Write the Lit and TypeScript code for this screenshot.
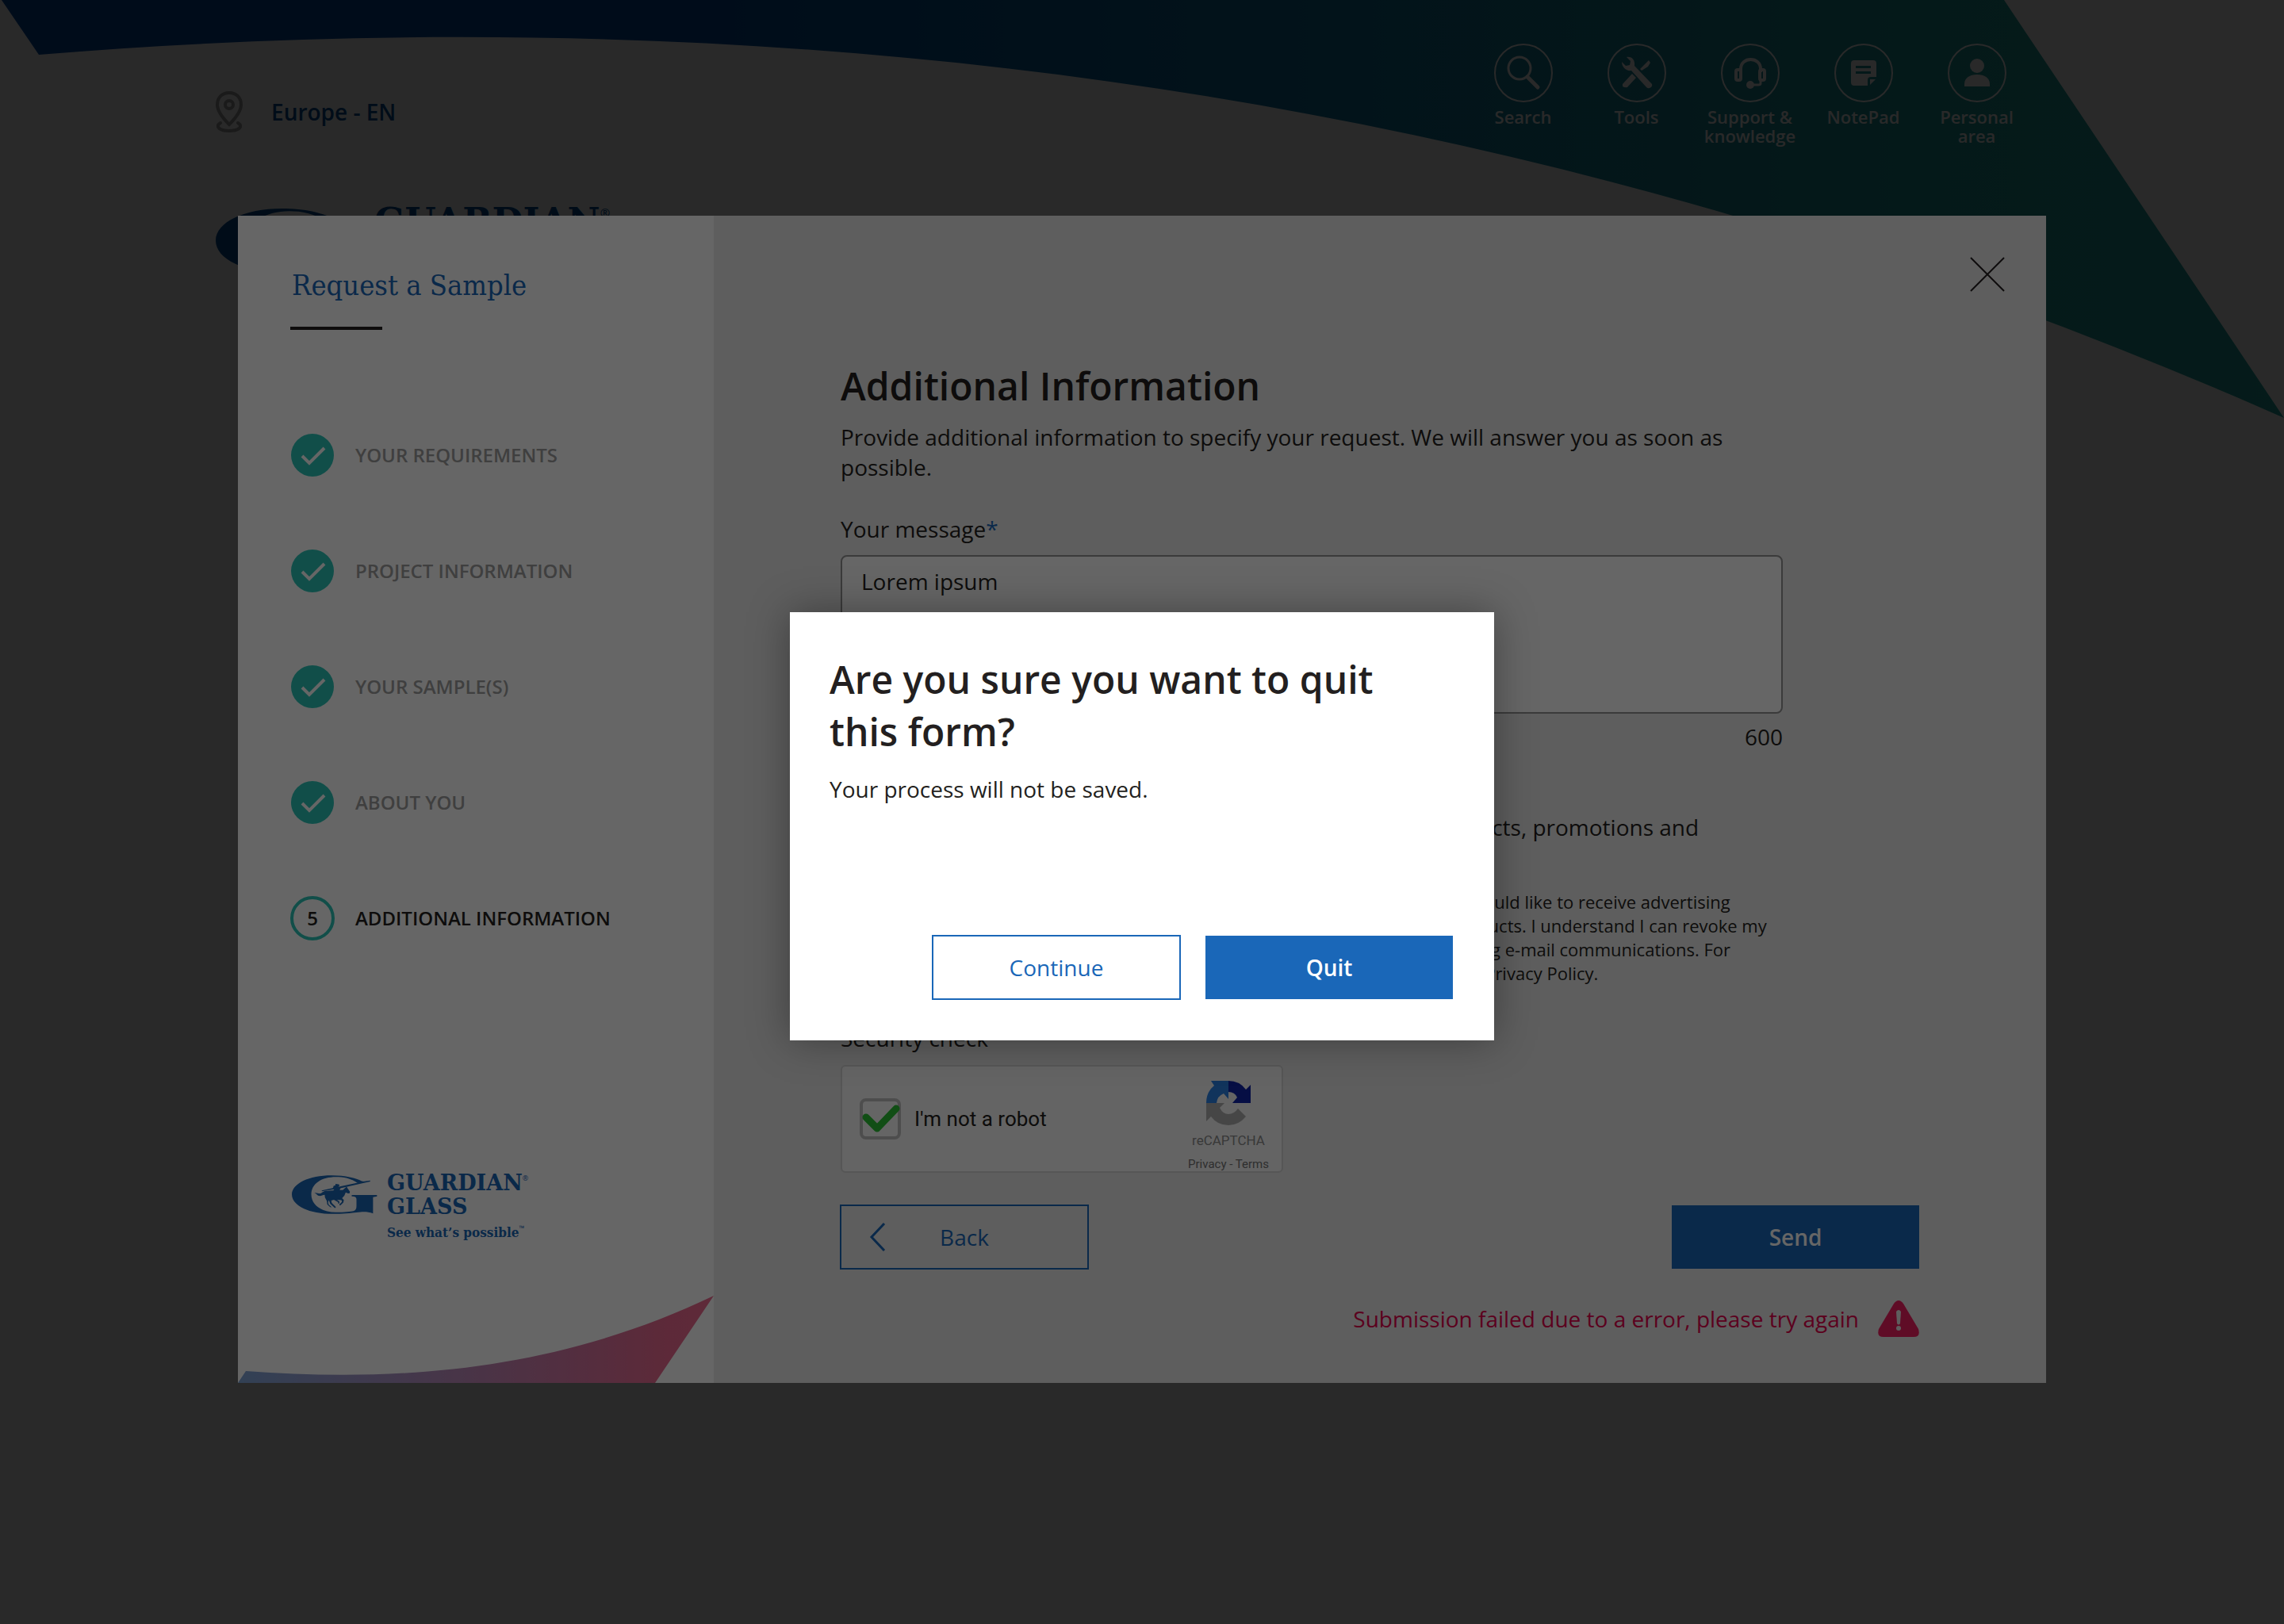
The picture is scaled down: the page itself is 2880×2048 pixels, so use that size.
import { LitElement, html, css, svg } from "lit";
import { customElement, property } from "lit/decorators.js";

const SANS = css`"Open Sans", "Noto Sans", sans-serif`;
const SLAB = css`"DejaVu Serif", serif`;
const SLAB_NARROW = css`"DejaVu Serif Condensed", "DejaVu Serif", serif`;

@customElement("guardian-logo")
class GuardianLogo extends LitElement {
  @property({ type: Boolean, reflect: true }) large = false;
  static styles = css`
    :host { display: block; color: #1a66b6; --s: 3px; }
    :host([large]) { color: #00529b; --s: 5px; }
    .row { display: flex; align-items: flex-start; gap: calc(var(--s) * 4); }
    .mark { width: calc(var(--s) * 36); height: calc(var(--s) * 17); flex: none; }
    .words { display: flex; flex-direction: column; font-family: ${SLAB}; margin-top: calc(var(--s) * -1); }
    .name { display: flex; align-items: flex-start; font-weight: 700; font-size: calc(var(--s) * 9); line-height: calc(var(--s) * 9); }
    .name + .name { margin-top: var(--s); }
    .reg { font: 400 calc(var(--s) * 3) / 1 ${SANS}; margin-top: var(--s); }
    .tag { display: flex; align-items: flex-start; font-family: ${SLAB_NARROW}; font-weight: 700; font-size: calc(var(--s) * 6 - 1px); line-height: calc(var(--s) * 7); margin-top: calc(var(--s) * 3); white-space: nowrap; }
    .tm { font: 400 calc(var(--s) * 3) / 1 ${SANS}; }
  `;
  render() {
    return html`<div class="row">
      <svg class="mark" viewBox="24 22 326 151" fill="currentColor" aria-hidden="true">
        <path d="M308 49 L275 54 C250 35 220 30 192 30 C137 30 98 55 98 97 C98 137 137 165 192 165 C225 165 248 162 258 160 C268 157 270 150 270 140 L270 116 C270 108 266 104 252 104 L252 99 L348 99 L348 104 L333 107 L333 169 C315 163 300 162 285 164 C240 169 220 171 180 171 C90 171 24 140 24 97 C24 55 90 24 175 24 C228 24 268 34 290 46 Z"/>
        <path d="M322 44 L322 48 L205 74 L138 85 L138 82 L200 68 L300 47 Z"/>
        <path d="M110 91 C118 89 126 95 134 93 C142 88 146 83 158 83 L182 82 L186 76 L180 74 L183 64 L190 62 L190 57 L202 58 L206 62 L201 67 L210 71 L206 80 L218 80 L229 70 L233 67 L235 72 L245 86 L244 92 L238 93 L229 89 L224 101 L215 111 L222 118 L220 128 L209 138 L205 138 L206 134 L215 125 L213 119 L196 117 L205 124 L205 131 L201 132 L200 126 L184 117 L174 120 L176 129 L192 145 L188 149 L170 132 L165 119 L162 126 L164 135 L176 146 L170 145 L159 135 L157 122 L150 108 L149 98 C140 99 135 104 126 102 C120 100 116 93 110 91 Z"/>
      </svg>
      <div class="words">
        <span class="name">GUARDIAN<span class="reg">®</span></span>
        <span class="name">GLASS</span>
        <span class="tag">See what’s possible<span class="tm">™</span></span>
      </div>
    </div>`;
  }
}

const navItems = [
  { label: "Search", icon: svg`<circle cx="32" cy="31" r="14" fill="none" stroke="currentColor" stroke-width="3"/><path d="M42 42 L55 55" fill="none" stroke="currentColor" stroke-width="5" stroke-linecap="round"/>` },
  { label: "Tools", icon: svg`<path fill="currentColor" d="M24 17 C31 16 35 21 34 28 L56 51 Q57 53 55 55 L53 56 Q51 57 49 55 L30 34 C24 35 18 30 18 23 L23 28 L28 27 L29 22 Z M52 21 L54 24 L51 29 L43 34 L41 32 L47 26 Z M31 38 L36 43 L25 55 Q22 56 19 54 L19 51 Z"/>` },
  { label: "Support & knowledge", icon: svg`<g fill="none" stroke="currentColor"><path d="M25 36 V32 C25 16 50 16 50 32 V36" stroke-width="4"/><rect x="19" y="33" width="6" height="13" rx="2" stroke-width="4"/><rect x="49" y="33" width="6" height="13" rx="2" stroke-width="4"/><path d="M50 46 V50 Q50 52 47 52 H38" stroke-width="3"/></g><circle cx="37" cy="52" r="5" fill="currentColor"/>` },
  { label: "NotePad", icon: svg`<path fill="currentColor" fill-rule="evenodd" d="M25 21 H49 Q53 21 53 25 V42 H46 Q42 42 42 46 V53 H25 Q21 53 21 49 V25 Q21 21 25 21 Z M27 28 V31 H46 V28 Z M27 35 V38 H46 V35 Z M45 45 H52 L45 52 Z"/>` },
  { label: "Personal area", icon: svg`<circle cx="37" cy="28" r="9" fill="currentColor"/><path fill="currentColor" d="M21 54 V51 C21 43 28 39 37 39 C46 39 53 43 53 51 V54 Z"/>` },
];

const steps = ["YOUR REQUIREMENTS", "PROJECT INFORMATION", "YOUR SAMPLE(S)", "ABOUT YOU", "ADDITIONAL INFORMATION"];

@customElement("app-root")
class AppRoot extends LitElement {
  static styles = css`
    :host { display: block; position: relative; min-height: 100vh; background: #fff; color: #231f20; font: 400 28px/38px ${SANS}; overflow: hidden; }
    * { box-sizing: border-box; }
    h1, h2, p, ol { margin: 0; padding: 0; }
    button { font: inherit; border: 0; padding: 0; background: none; cursor: pointer; }
    svg { display: block; }

    .swoosh { position: absolute; top: 0; left: 0; width: 100%; }
    .top { position: relative; display: flex; justify-content: space-between; align-items: flex-start; padding: 55px 316px 0 272px; }
    .region { display: flex; align-items: center; gap: 36px; margin-top: 60px; color: #00529b; font-weight: 600; text-decoration: none; }
    .pin { width: 34px; height: 52px; color: #a2a2a2; }
    .nav { display: flex; }
    .nav a { display: flex; flex-direction: column; align-items: center; width: 143px; color: #fff; font-weight: 600; font-size: 22px; line-height: 24px; text-align: center; text-decoration: none; gap: 6px; }
    .nav span { width: 120px; }
    .ring { width: 74px; height: 74px; }
    .brand { position: relative; padding: 78px 0 0 272px; }

    .backdrop { position: absolute; inset: 0; background: rgba(0, 0, 0, 0.6); }
    .back-form { padding: 272px 300px 0; }
    .panel { display: grid; grid-template-columns: 600px 1fr; background: #ebebeb; }
    .side { position: relative; display: flex; flex-direction: column; padding: 66px 66px 0; background: #fff; }
    .side h1 { margin-left: 2px; font: 400 36px/44px ${SLAB_NARROW}; color: #1a67b8; white-space: nowrap; }
    .rule { width: 116px; height: 4px; margin-top: 30px; background: #231f20; }
    .steps { list-style: none; display: flex; flex-direction: column; gap: 90px; margin-top: 130px; }
    .step { display: flex; align-items: center; gap: 26px; height: 56px; font-size: 24px; font-weight: 600; color: #9d9d9d; white-space: nowrap; }
    .dot { width: 56px; height: 56px; flex: none; display: grid; place-items: center; }
    .dot svg { width: 54px; height: 54px; }
    .current { color: #231f20; }
    .current .dot { border: 4px solid #2bc4b6; border-radius: 50%; }
    .side guardian-logo { margin-top: 295px; margin-left: 2px; }
    .wave { position: absolute; left: 0; bottom: 0; width: 100%; }

    .main { position: relative; display: flex; flex-direction: column; padding: 182px 160px 58px; }
    .close { position: absolute; top: 52px; right: 52px; width: 44px; height: 44px; color: #231f20; }
    h2 { font-size: 48px; line-height: 66px; font-weight: 600; }
    .column { display: flex; flex-direction: column; width: 88%; max-width: 1188px; }
    .intro { margin-top: 12px; }
    .label { margin-top: 40px; }
    .star { color: #1a67b8; }
    textarea { display: block; width: 100%; height: 200px; margin-top: 14px; padding: 12px 24px; border: 2px solid #949494; border-radius: 8px; background: #fff; color: inherit; font: inherit; resize: none; outline: 0; }
    .count { margin-top: 10px; text-align: right; }
    .lead { margin-top: 76px; white-space: nowrap; }
    .consent { display: flex; gap: 20px; margin-top: 60px; font-size: 22px; line-height: 30px; white-space: nowrap; }
    .consent input { width: 28px; height: 28px; margin: 0; flex: none; }
    .security { margin-top: 48px; }
    .captcha { position: relative; display: flex; justify-content: space-between; width: 558px; height: 136px; margin-top: 15px; border: 2px solid #d6d6d6; border-radius: 6px; background: #f9f9f9; font-family: Roboto, sans-serif; }
    .robot { display: flex; align-items: center; gap: 17px; padding-left: 22px; font-size: 26px; line-height: 30px; }
    .robot input { appearance: none; width: 52px; height: 52px; margin: 0; border: 4px solid #c1c1c1; border-radius: 8px; background: #fcfcfc; }
    .tick { position: absolute; left: 22px; top: 40px; width: 52px; height: 52px; pointer-events: none; }
    .badge { display: flex; flex-direction: column; align-items: center; width: 134px; padding-top: 18px; color: #8d8d8d; font-size: 17px; line-height: 22px; }
    .badge svg { width: 56px; height: 56px; margin-bottom: 8px; }
    .terms { margin-top: 10px; font-size: 15px; line-height: 18px; color: #757575; }
    .terms a { color: inherit; text-decoration: none; }
    .actions { display: flex; justify-content: space-between; margin-top: 41px; }
    .btn { width: 312px; height: 80px; }
    .btn.ghost { position: relative; outline: 2px solid #1a67b8; outline-offset: -1px; color: #1a67b8; }
    .btn.solid { background: #1a67b8; color: #fff; font-weight: 600; }
    .chevron { position: absolute; left: 36px; top: 22px; width: 22px; height: 36px; }
    .error { display: flex; align-items: center; justify-content: flex-end; gap: 24px; margin-top: 40px; color: #e4004c; }
    .error svg { width: 52px; height: 46px; }

    .confirm { display: grid; justify-content: center; align-content: start; padding-top: 772px; }
    .dialog { width: 888px; padding: 52px 52px 52px 50px; background: #fff; box-shadow: 0 0 48px rgba(0, 0, 0, 0.35); }
    .dialog h2 { max-width: 720px; }
    .dialog p { margin-top: 20px; }
    .choices { display: flex; justify-content: flex-end; gap: 32px; margin-top: 166px; }
  `;

  private doneIcon() {
    return html`<svg viewBox="0 0 54 54" aria-hidden="true"><circle cx="27" cy="27" r="27" fill="#2bc4b6"/><path d="M14 28 L23 37 L42 18" fill="none" stroke="#fff" stroke-width="4"/></svg>`;
  }

  render() {
    return html`
      <svg class="swoosh" viewBox="0 0 2880 528" aria-hidden="true">
        <defs><linearGradient id="sea" x1="0" x2="1"><stop offset="0" stop-color="#004ba8"/><stop offset=".3" stop-color="#004fa4"/><stop offset=".6" stop-color="#127ca2"/><stop offset=".85" stop-color="#20a0a0"/><stop offset="1" stop-color="#24aaa4"/></linearGradient></defs>
        <path fill="url(#sea)" d="M2 0 L49 69 C993 -8 1937 109 2880 527 L2527 0 Z"/>
      </svg>
      <header class="top">
        <a class="region" href="#region">
          <svg class="pin" viewBox="0 0 34 52" fill="none" stroke="currentColor" stroke-width="4" aria-hidden="true"><path d="M17 42 C11 36 2 26 2 17 C2 8 8 2 17 2 C26 2 32 8 32 17 C32 26 23 36 17 42 Z"/><circle cx="17" cy="17" r="5"/><path d="M6 40 C-2 45 6 50 17 50 C28 50 36 45 28 40" stroke-linecap="round"/></svg>
          Europe - EN
        </a>
        <nav class="nav" aria-label="Main">
          ${navItems.map((n) => html`<a href="#nav"><svg class="ring" viewBox="0 0 74 74" aria-hidden="true"><circle cx="37" cy="37" r="36" fill="none" stroke="currentColor" stroke-width="2"/>${n.icon}</svg><span>${n.label}</span></a>`)}
        </nav>
      </header>
      <div class="brand"><guardian-logo large></guardian-logo></div>

      <div class="backdrop back-form">
        <section class="panel">
          <aside class="side">
            <h1>Request a Sample</h1>
            <div class="rule"></div>
            <ol class="steps">
              ${steps.map((s, i) => html`<li class="step ${i === 4 ? "current" : ""}"><span class="dot">${i === 4 ? "5" : this.doneIcon()}</span><span>${s}</span></li>`)}
            </ol>
            <guardian-logo></guardian-logo>
            <svg class="wave" viewBox="0 0 600 110" aria-hidden="true">
              <defs><linearGradient id="dusk" x1="0" x2="1"><stop offset="0" stop-color="#7da2d4"/><stop offset=".35" stop-color="#a78cbc"/><stop offset=".7" stop-color="#cf74a0"/><stop offset=".9" stop-color="#e8688e"/><stop offset="1" stop-color="#ec6a90"/></linearGradient></defs>
              <path fill="url(#dusk)" d="M0 110 L10 95 C200 109 400 96 600 0 L526 110 Z"/>
            </svg>
          </aside>
          <div class="main">
            <button class="close" aria-label="Close"><svg viewBox="0 0 44 44"><path d="M1 1 L43 43 M43 1 L1 43" stroke="currentColor" stroke-width="2" fill="none"/></svg></button>
            <div class="column">
              <h2>Additional Information</h2>
              <p class="intro">Provide additional information to specify your request. We will answer you as soon as possible.</p>
              <label class="label" for="message">Your message<span class="star">*</span></label>
              <textarea id="message" .value=${"Lorem ipsum"}></textarea>
              <div class="count">600</div>
              <p class="lead">Would you like to receive regular information about new products, promotions and</p>
              <label class="consent"><input type="checkbox" /><span>I agree to the processing of all my personal data by Guardian Glass and I would like to receive advertising<br />and also information by e-mail about current and upcoming Guardian products. I understand I can revoke my<br />consent for the future at any time by using the unsubscribe link in marketing e-mail communications. For<br />more information on how we use data and on your rights, please read our Privacy Policy.</span></label>
              <div class="security">Security check</div>
              <div class="captcha">
                <label class="robot"><input type="checkbox" checked />I'm not a robot</label>
                <svg class="tick" viewBox="0 0 52 52" aria-hidden="true"><path d="M8 24 L22 38 L46 13" fill="none" stroke="#2cc436" stroke-width="9" stroke-linecap="round" stroke-linejoin="round"/></svg>
                <div class="badge">
                  <svg viewBox="0 0 56 56" aria-hidden="true"><path fill="#2c82e6" d="M6 0 H28 V23 L22 16 Q14 19 13 28 H0 Q0 14 10 6 Z"/><path fill="#0f24aa" d="M28 0 Q42 0 50 11 L56 5 V28 H33 L39 21 Q36 14 28 14 Z"/><path fill="#b0b0b0" d="M0 28 H23 L17 34 Q21 42 28 42 Q35 42 40 35 L50 45 Q41 56 28 56 Q14 56 6 45 L0 51 Z"/></svg>
                  <span>reCAPTCHA</span>
                  <span class="terms"><a href="#privacy">Privacy</a> - <a href="#terms">Terms</a></span>
                </div>
              </div>
            </div>
            <div class="actions">
              <button class="btn ghost"><svg class="chevron" viewBox="0 0 22 36" aria-hidden="true"><path d="M19 1 L3 18 L19 35" fill="none" stroke="currentColor" stroke-width="3"/></svg>Back</button>
              <button class="btn solid">Send</button>
            </div>
            <div class="error" role="alert">Submission failed due to a error, please try again
              <svg viewBox="0 0 52 46" aria-hidden="true"><path fill="#ee1f60" d="M20 4 Q26 -4 32 4 L51 36 Q54 46 45 46 H7 Q-2 46 1 36 Z"/><path fill="#ebebeb" d="M23 14 Q26 10 29 14 L28 29 Q26 32 24 29 Z"/><circle cx="26" cy="35" r="3" fill="#ebebeb"/></svg>
            </div>
          </div>
        </section>
      </div>

      <div class="backdrop confirm">
        <div class="dialog" role="alertdialog" aria-modal="true" aria-labelledby="ask">
          <h2 id="ask">Are you sure you want to quit this form?</h2>
          <p>Your process will not be saved.</p>
          <div class="choices">
            <button class="btn ghost">Continue</button>
            <button class="btn solid">Quit</button>
          </div>
        </div>
      </div>
    `;
  }
}
